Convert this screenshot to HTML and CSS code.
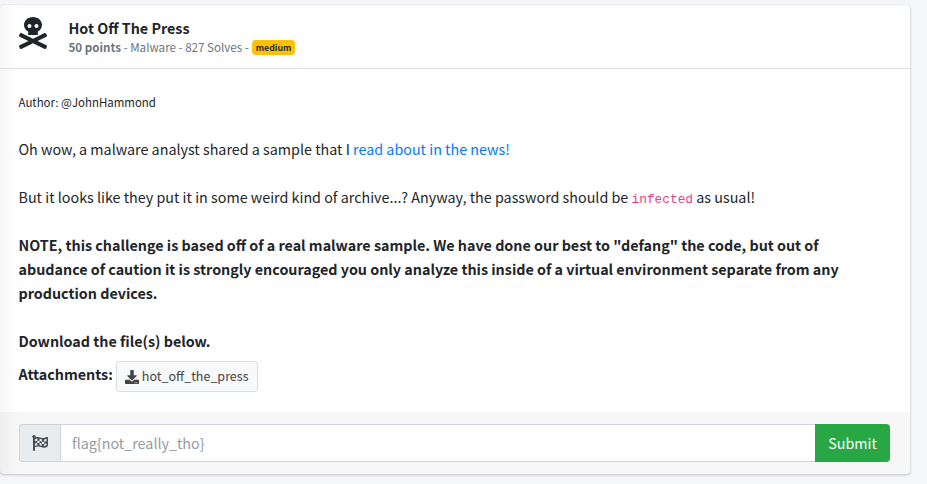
FILE: index.html
```html
<!DOCTYPE html>
<html lang="en">
<head>
<meta charset="utf-8">
<title>Hot Off The Press</title>
<link rel="stylesheet" href="styles.css">
</head>
<body>
<main class="card">
  <header class="card-header">
    <svg class="skull" viewBox="0 0 448 512" fill="currentColor"><path d="M439.15 453.06L297.17 384l141.99-69.06c7.9-3.95 11.11-13.56 7.15-21.46L432 264.85c-3.95-7.9-13.56-11.11-21.47-7.16L224 348.41 37.47 257.69c-7.9-3.95-17.51-.75-21.47 7.16L1.69 293.48c-3.95 7.9-.75 17.51 7.15 21.46L150.83 384 8.85 453.06c-7.9 3.95-11.11 13.56-7.15 21.47l14.31 28.63c3.95 7.9 13.56 11.11 21.47 7.15L224 419.59l186.53 90.72c7.9 3.95 17.51.75 21.47-7.15l14.31-28.63c3.95-7.91.74-17.52-7.16-21.47zM150 237.28l-5.48 25.87c-2.67 12.62 5.42 24.85 16.45 24.85h126.08c11.03 0 19.12-12.23 16.45-24.85l-5.5-25.87c41.78-22.41 70-62.75 70-109.28C368 57.31 303.53 0 224 0S80 57.31 80 128c0 46.53 28.22 86.87 70 109.28zM280 112c17.65 0 32 14.35 32 32s-14.35 32-32 32-32-14.35-32-32 14.35-32 32-32zm-112 0c17.65 0 32 14.35 32 32s-14.35 32-32 32-32-14.35-32-32 14.35-32 32-32z"/></svg>
    <div class="heading">
      <h1 class="title">Hot Off The Press</h1>
      <div class="meta"><span><b>50 points</b> - Malware - 827 Solves -</span><span class="badge">medium</span></div>
    </div>
  </header>
  <section class="card-body">
    <p class="author">Author: @JohnHammond</p>
    <p>Oh wow, a malware analyst shared a sample that I <a class="link">read about in the news!</a></p>
    <p>But it looks like they put it in some weird kind of archive...? Anyway, the password should be <code>infected</code> as usual!</p>
    <p class="strong">NOTE, this challenge is based off of a real malware sample. We have done our best to "defang" the code, but out of<br>abudance of caution it is strongly encouraged you only analyze this inside of a virtual environment separate from any<br>production devices.</p>
    <p class="strong">Download the file(s) below.</p>
    <div class="attachments">
      <span class="strong">Attachments:</span>
      <a class="file"><svg class="download" viewBox="0 0 512 512" fill="currentColor"><path d="M216 0h80c13.300 0 24 10.700 24 24v168h87.700c17.800 0 26.700 21.500 14.100 34.100L269.700 378.300c-7.500 7.500-19.800 7.500-27.300 0L90.100 226.100c-12.600-12.600-3.700-34.100 14.100-34.100H192V24c0-13.300 10.700-24 24-24zm296 376v112c0 13.300-10.700 24-24 24H24c-13.300 0-24-10.700-24-24V376c0-13.300 10.700-24 24-24h146.700l49 49c20.100 20.100 52.500 20.100 72.600 0l49-49H488c13.300 0 24 10.700 24 24zm-124 88c0-11-9-20-20-20s-20 9-20 20 9 20 20 20 20-9 20-20zm64 0c0-11-9-20-20-20s-20 9-20 20 9 20 20 20 20-9 20-20z"/></svg><span class="file-name">hot_off_the_press</span></a>
    </div>
  </section>
  <footer class="card-footer">
    <span class="prefix"><svg class="flag" viewBox="0 0 512 512" fill="currentColor"><path d="M243.200 189.900V258c26.100 5.900 49.300 15.600 73.600 22.300v-68.200c-26-5.800-49.400-15.500-73.600-22.200zm223.300-123c-34.300 15.900-76.500 31.900-117 31.900C296 98.800 251.700 64 184.300 64c-25 0-47.300 4.400-68 12 2.800-7.300 4.100-15.200 3.600-23.600C118.100 24 94.800 1.200 66.300 0 34.300-1.300 8 24.300 8 56c0 19 9.500 35.800 24 45.900V488c0 13.300 10.700 24 24 24h16c13.300 0 24-10.700 24-24v-94.400c28.300-12.100 63.600-22.100 114.400-22.100 53.600 0 97.800 34.800 165.200 34.800 48.200 0 86.700-16.300 122.500-40.900 8.700-6 13.800-15.800 13.800-26.400V95.900c.1-23.300-24.200-38.800-45.400-29zM169.600 325.500c-25.800 2.700-50 8.200-73.600 16.600v-70.500c26.200-9.300 47.500-15 73.600-17.400v71.300zM464 191c-23.600 9.800-46.300 19.500-73.600 23.900V286c24.800-3.400 51.400-11.800 73.600-26v70.500c-25.100 16.100-48.500 24.700-73.600 27.100V286c-27 3.700-47.900 1.500-73.600-5.600v67.400c-23.900-7.400-47.300-16.700-73.600-21.300V258c-19.700-4.400-40.800-6.800-73.600-3.800v-70c-22.400 3.100-44.600 10.200-73.600 20.900v-70.500c33.200-12.200 50.100-19.800 73.600-22v71.600c27-3.700 48.400-1.300 73.600 5.700v-67.400c23.700 7.400 47.200 16.700 73.600 21.300v68.400c23.700 5.300 47.600 6.900 73.600 2.700V143c27-4.800 52.300-13.600 73.600-22.500z"/></svg></span>
    <input class="answer" type="text" placeholder="flag{not_really_tho}">
    <button class="submit">Submit</button>
  </footer>
</main>
</body>
</html>
```

FILE: styles.css
```css
* { box-sizing: border-box; }
body {
  margin: 0;
  height: 484px;
  padding: 5px 17px 0 0;
  overflow: hidden;
  background: #f4f6f9;
  color: #212529;
  font: 14.320px/24px "Noto Sans CJK JP", "Open Sans", sans-serif;
}
p { margin: 0 0 24px; white-space: nowrap; }
.card {
  height: 469px;
  border-radius: 4px;
  background: linear-gradient(90deg, rgba(0,0,0,.035), transparent 18px), #fff;
  box-shadow: 0 0 1px rgba(0,0,0,.125), 0 1px 3px rgba(0,0,0,.2);
}
.card-header {
  display: flex;
  height: 64px;
  padding: 12px 18.500px;
  gap: 22px;
  border-bottom: 1px solid #dfdfdf;
}
.skull { width: 28px; height: 32px; flex: none; }
.heading { margin-top: -1px; }
.title { margin: 0; font-size: 14.320px; line-height: 24px; font-weight: 700; }
.meta { display: flex; gap: 3px; align-items: center; margin-top: -1px; color: #6c757d; font-size: 11.6px; line-height: 14px; white-space: nowrap; }
.badge { height: 15px; margin-top: 1px; padding: 0 4px; border-radius: 4px; background: #ffc107; color: #1f2d3d; font-size: 8.700px; line-height: 15px; font-weight: 700; }
.card-body { height: 343px; padding: 21px 18.500px 0; }
.author { margin-bottom: 23px; font-size: 11.460px; }
.link { color: #007bff; }
code { color: #e83e8c; font: 12.830px "Liberation Mono", monospace; }
.strong { font-weight: 700; }
.attachments { display: flex; gap: 3px; margin-top: -16px; align-items: flex-start; }
.attachments > .strong { margin-top: 1px; }
.file { display: flex; align-items: center; gap: 3px; height: 31px; padding: 0 8px; border: 1px solid #ddd; border-radius: 3px; background: #f8f9fa; color: #444; font-size: 12.530px; }
.file-name { margin-top: -2px; }
.download { width: 14px; height: 14px; }
.card-footer { display: flex; height: 62px; padding: 12px 20px 12px 19px; border-radius: 0 0 4px 4px; background: rgba(0,0,0,.03); }
.prefix { display: flex; align-items: center; justify-content: center; width: 41px; border: 1px solid #ced4da; border-right: 0; border-radius: 4px 0 0 4px; background: #e9ecef; color: #495057; }
.flag { width: 16px; height: 16px; margin-right: 1px; }
.answer { flex: 1; min-width: 0; border: 1px solid #ced4da; border-right: 0; border-radius: 0; padding: 0 11px; background: #fff; font: inherit; outline: 0; }
.answer::placeholder { color: #939ba2; opacity: 1; }
.submit { width: 75px; padding: 0; border: 0; border-radius: 0 4px 4px 0; background: #28a745; color: #fff; font: inherit; }
```
